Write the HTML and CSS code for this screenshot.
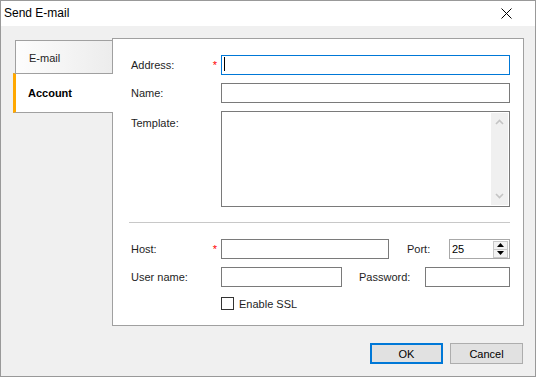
FILE: index.html
```html
<!DOCTYPE html>
<html lang="en">
<head>
    <meta charset="UTF-8">
    <meta name="viewport" content="width=device-width, initial-scale=1.0">
    <title>Send E-mail</title>
    <link rel="stylesheet" href="styles.css">
</head>
<body>
    <div class="window">
        <div class="titlebar">
            <span class="title">Send E-mail</span>
            <svg class="close" width="11" height="11" viewBox="0 0 11 11">
                <path d="M0.5 0.5 L10.5 10.5 M10.5 0.5 L0.5 10.5" stroke="#000" stroke-width="1" fill="none"/>
            </svg>
        </div>

        <div class="main">
            <div class="tabs">
                <div class="tab">E-mail</div>
                <div class="tab active">Account</div>
            </div>

            <div class="panel">
                <div class="row">
                    <label class="lbl">Address:<span class="req">*</span></label>
                    <div class="field-wrap">
                        <input type="text" class="field focused w-full">
                        <span class="caret"></span>
                    </div>
                </div>
                <div class="row">
                    <label class="lbl">Name:</label>
                    <input type="text" class="field w-full">
                </div>
                <div class="row top">
                    <label class="lbl lbl-top">Template:</label>
                    <div class="memo">
                        <div class="vscroll">
                            <svg width="9" height="6" viewBox="0 0 9 6"><path d="M1 5 L4.5 1.5 L8 5" stroke="#c4c4c4" stroke-width="1.6" fill="none"/></svg>
                            <svg width="9" height="6" viewBox="0 0 9 6"><path d="M1 1 L4.5 4.5 L8 1" stroke="#c4c4c4" stroke-width="1.6" fill="none"/></svg>
                        </div>
                    </div>
                </div>

                <div class="separator"></div>

                <div class="row">
                    <label class="lbl">Host:<span class="req">*</span></label>
                    <input type="text" class="field w-host">
                    <label class="lbl-inline lbl-port">Port:</label>
                    <div class="spin">
                        <span class="spin-value">25</span>
                        <div class="spin-btns">
                            <div class="spin-btn"><svg width="7" height="4" viewBox="0 0 7 4"><path d="M0 4 L3.5 0 L7 4 Z" fill="#000"/></svg></div>
                            <div class="spin-btn"><svg width="7" height="4" viewBox="0 0 7 4"><path d="M0 0 L3.5 4 L7 0 Z" fill="#000"/></svg></div>
                        </div>
                    </div>
                </div>
                <div class="row">
                    <label class="lbl">User name:</label>
                    <input type="text" class="field w-user">
                    <label class="lbl-inline lbl-pass">Password:</label>
                    <input type="password" class="field w-pass">
                </div>
                <div class="row check-row">
                    <span class="checkbox"></span>
                    <span class="check-text">Enable SSL</span>
                </div>
            </div>
        </div>

        <div class="buttons">
            <button class="btn default">OK</button>
            <button class="btn">Cancel</button>
        </div>
    </div>
</body>
</html>
```

FILE: styles.css
```css
* { box-sizing: border-box; }
body { margin: 0; font-family: "Liberation Sans", Arial, sans-serif; font-size: 11px; color: #1e1e1e; }

.window { width: 536px; height: 377px; border: 1px solid #999; background: #f0f0f0; }

.titlebar { height: 25px; background: #fff; display: flex; align-items: center; justify-content: space-between; padding: 0 23px 1px 3px; }
.title { font-size: 12px; color: #000; }
.close { display: block; margin-top: 1px; }

.main { display: flex; padding: 12px 11px 0 12px; }

.tabs { width: 100px; margin-right: -1px; padding-top: 2px; display: flex; flex-direction: column; }
.tab { height: 33px; margin-left: 2px; padding: 2px 0 0 13px; display: flex; align-items: center; border: 1px solid #a0a0a0; border-bottom: none; border-right: none; background: linear-gradient(to right, #fdfdfd, #ececec); color: #1e1e1e; }
.tab.active { position: relative; z-index: 1; height: 40px; margin-left: 0; padding: 0 0 0 12px; border-top: 1px solid #a0a0a0; border-bottom: 1px solid #a0a0a0; border-left: 3px solid #ffa800; background: #fff; font-weight: bold; color: #000; }

.panel { flex: 1; height: 288px; border: 1px solid #a0a0a0; background: #fff; padding: 16px 13px 0 16px; }

.row { display: flex; align-items: center; margin-bottom: 8px; }
.row.top { align-items: flex-start; margin-bottom: 0; }
.lbl { width: 92px; padding-left: 2px; padding-right: 4px; display: flex; justify-content: space-between; }
.lbl-top { padding-top: 6px; }
.req { color: #f00; }

.field { height: 20px; border: 1px solid #7a7a7a; background: #fff; padding: 0 3px; font: inherit; outline: none; display: block; }
.field.focused { border-color: #0078d7; }
.field-wrap { position: relative; flex: 1; }
.w-full { flex: 1; width: 100%; }
.caret { position: absolute; left: 3px; top: 2px; width: 1px; height: 14px; background: #000; }
.w-host { width: 168px; }
.w-user { width: 121px; }
.w-pass { width: 85px; }
.lbl-inline { display: block; }
.lbl-port { margin-left: 18px; width: 42px; }
.lbl-pass { margin-left: 17px; width: 66px; }

.memo { flex: 1; height: 96px; border: 1px solid #7a7a7a; padding: 1px; display: flex; justify-content: flex-end; }
.vscroll { width: 17px; background: #f0f0f0; display: flex; flex-direction: column; justify-content: space-between; align-items: center; padding: 6px 0 6px; }
.vscroll svg { display: block; }

.separator { height: 1px; background: #c8c8c8; margin: 15px 0 16px; }

.spin { width: 61px; height: 20px; border: 1px solid #a8a8a8; display: flex; align-items: center; justify-content: space-between; padding: 0 1px 0 2px; }
.spin-value { color: #000; }
.spin-btns { width: 15px; height: 17px; display: flex; flex-direction: column; border: 1px solid #c8c8c8; }
.spin-btn { flex: 1; display: flex; align-items: center; justify-content: center; background: #f2f2f2; }
.spin-btn + .spin-btn { border-top: 1px solid #c8c8c8; }
.spin-btn svg { display: block; }

.check-row { padding-left: 92px; margin-top: 10px; }
.checkbox { width: 13px; height: 13px; border: 1px solid #333; background: #fff; margin-right: 5px; }
.check-text { color: #1e1e1e; }

.buttons { display: flex; justify-content: flex-end; gap: 7px; padding: 17px 12px 0 0; }
.btn { width: 73px; height: 21px; border: 1px solid #adadad; background: #e1e1e1; font: inherit; color: #000; padding: 0; }
.btn.default { border: 2px solid #0078d7; }
```
